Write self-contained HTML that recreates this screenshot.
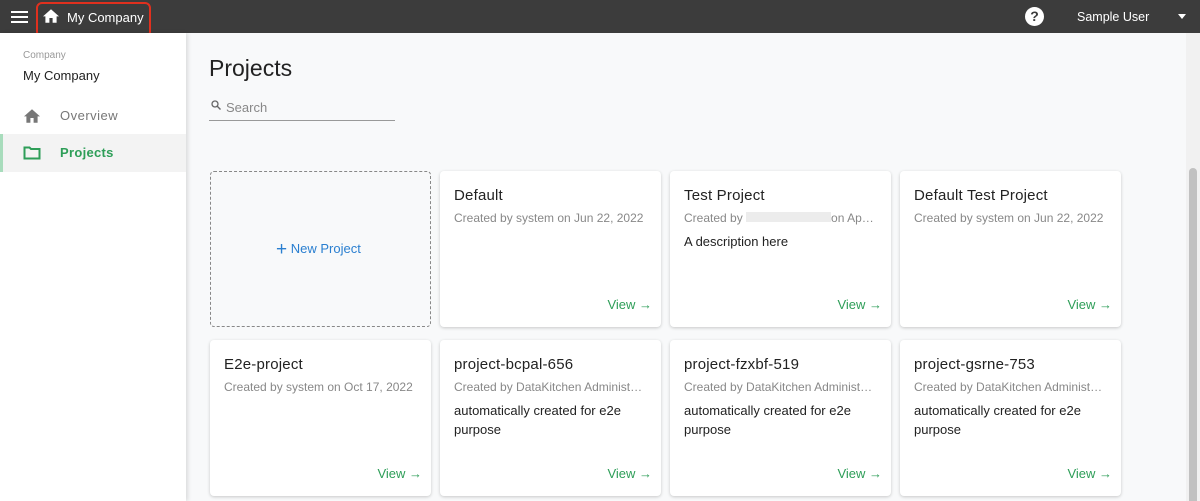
<!DOCTYPE html>
<html><head><style>
*{box-sizing:border-box;margin:0;padding:0}
html,body{width:1200px;height:501px;overflow:hidden}
body{font-family:"Liberation Sans",sans-serif;background:#f8f9fa;position:relative}
.top{position:absolute;left:0;top:0;width:1200px;height:33px;background:#3c3c3c;color:#fff}
.side{position:absolute;left:0;top:33px;width:186px;height:468px;background:#fff;box-shadow:2px 0 4px rgba(0,0,0,.12)}
.card{position:absolute;width:221px;height:156px;background:#fff;border-radius:4px;box-shadow:0 1px 3px rgba(0,0,0,.2)}
.card h3{position:absolute;left:14px;top:16px;font-size:15px;font-weight:normal;color:#222;letter-spacing:.2px}
.card .c{position:absolute;left:14px;top:40px;font-size:12px;color:#888;white-space:nowrap;width:191px;overflow:hidden;text-overflow:ellipsis}
.card .d{position:absolute;left:14px;top:61px;font-size:13px;color:#222;line-height:19px;width:200px}
.card .v{position:absolute;right:9px;bottom:15px;font-size:13px;color:#2e9e58}
</style></head><body>
<div class="top">
 <div style="position:absolute;left:11px;top:11px;width:17px;height:2px;background:#fff;box-shadow:0 5px 0 #fff,0 10px 0 #fff"></div>
 <svg style="position:absolute;left:43px;top:9px" width="16" height="14" viewBox="0 0 20 17"><path d="M8 17v-6h4v6h5V9h3L10 0 0 9h3v8z" fill="#fff"/></svg>
 <div style="position:absolute;left:67px;top:10px;font-size:13px">My Company</div>
 <div style="position:absolute;left:36px;top:2px;width:115px;height:36px;border:2px solid #e0301e;border-radius:6px"></div>
 <div style="position:absolute;left:1025px;top:7px;width:19px;height:19px;border-radius:50%;background:#fff;color:#3c3c3c;font-weight:bold;font-size:14px;text-align:center;line-height:19px">?</div>
 <div style="position:absolute;left:1077px;top:10px;font-size:12.5px">Sample User</div>
 <div style="position:absolute;left:1178px;top:14px;border-left:4px solid transparent;border-right:4px solid transparent;border-top:5px solid #fff"></div>
</div>
<div style="position:absolute;left:1186px;top:33px;width:14px;height:468px;background:#f1f1f1"><div style="margin:135px 3px 0;height:340px;background:#c1c1c1;border-radius:4px"></div></div>
<div class="side">
 <div style="position:absolute;left:23px;top:17px;font-size:10px;color:#999">Company</div>
 <div style="position:absolute;left:23px;top:35px;font-size:13px;color:#222">My Company</div>
 <svg style="position:absolute;left:24px;top:76px" width="16" height="14" viewBox="0 0 20 17"><path d="M8 17v-6h4v6h5V9h3L10 0 0 9h3v8z" fill="#777"/></svg>
 <div style="position:absolute;left:60px;top:75px;font-size:13px;color:#777;letter-spacing:.5px">Overview</div>
 <div style="position:absolute;left:0;top:101px;width:186px;height:38px;background:#f3f3f3;border-left:3px solid #a8dcbc"></div>
 <svg style="position:absolute;left:23px;top:113px" width="18" height="14" viewBox="0 0 18 14"><path d="M1.5 1.5h5l1.5 1.5h8.5v9.5h-15z" fill="none" stroke="#2e9e58" stroke-width="2"/></svg>
 <div style="position:absolute;left:60px;top:112px;font-size:13px;color:#2e9e58;font-weight:bold;letter-spacing:.3px">Projects</div>
</div>
<div style="position:absolute;left:209px;top:55px;font-size:23px;color:#222">Projects</div>
<svg style="position:absolute;left:211px;top:100px" width="10" height="10" viewBox="0 0 10 10"><circle cx="4" cy="4" r="3" fill="none" stroke="#666" stroke-width="1.3"/><path d="M6 6l3.5 3.5" stroke="#666" stroke-width="1.4"/></svg>
<div style="position:absolute;left:226px;top:100px;font-size:13px;color:#888">Search</div>
<div style="position:absolute;left:209px;top:120px;width:186px;height:1px;background:#999"></div>
<div style="position:absolute;left:210px;top:171px;width:221px;height:156px;border:1px dashed #888;border-radius:4px;background:#f8f9fa"><div style="position:absolute;left:65px;top:67px;font-size:13px;color:#2a7fd0"><span style="font-size:19px;vertical-align:-2px">+</span> New Project</div></div>
<div class="card" style="left:440px;top:171px"><h3>Default</h3><div class="c">Created by system on Jun 22, 2022</div><div class="v">View →</div></div>
<div class="card" style="left:670px;top:171px"><h3>Test Project</h3><div class="c">Created by <span style="display:inline-block;width:85px;height:10px;background:#ececec"></span>on Apr...</div><div class="d">A description here</div><div class="v">View →</div></div>
<div class="card" style="left:900px;top:171px"><h3>Default Test Project</h3><div class="c">Created by system on Jun 22, 2022</div><div class="v">View →</div></div>
<div class="card" style="left:210px;top:340px"><h3>E2e-project</h3><div class="c">Created by system on Oct 17, 2022</div><div class="v">View →</div></div>
<div class="card" style="left:440px;top:340px"><h3>project-bcpal-656</h3><div class="c">Created by DataKitchen Administrator</div><div class="d">automatically created for e2e purpose</div><div class="v">View →</div></div>
<div class="card" style="left:670px;top:340px"><h3>project-fzxbf-519</h3><div class="c">Created by DataKitchen Administrator</div><div class="d">automatically created for e2e purpose</div><div class="v">View →</div></div>
<div class="card" style="left:900px;top:340px"><h3>project-gsrne-753</h3><div class="c">Created by DataKitchen Administrator</div><div class="d">automatically created for e2e purpose</div><div class="v">View →</div></div>
</body></html>
